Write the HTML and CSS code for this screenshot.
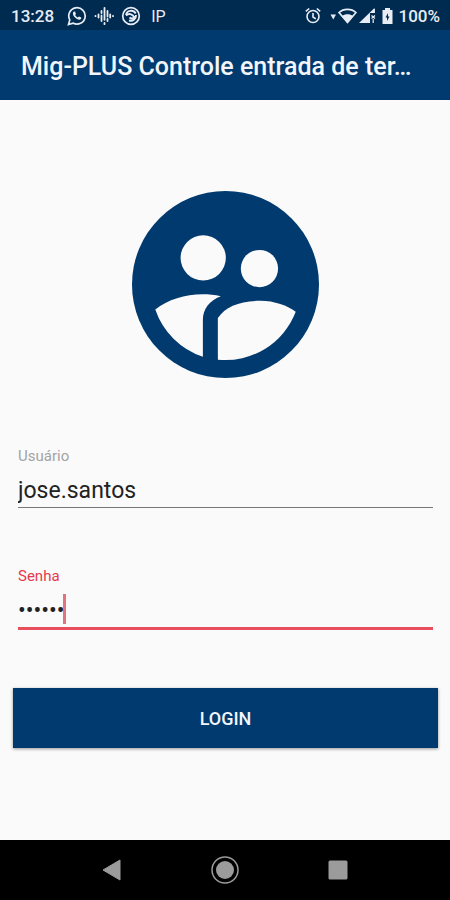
FILE: index.html
```html
<!DOCTYPE html>
<html lang="pt-BR">
<head>
    <meta charset="UTF-8">
    <meta name="viewport" content="width=device-width, initial-scale=1.0">
    <title>Mig-PLUS Login</title>
    <link rel="stylesheet" href="styles.css">
</head>
<body>

<!-- Status bar -->
<div class="status-bar">
    <span class="clock">13:28</span>
    <div class="status-icons">
        <svg width="20" height="20" viewBox="0 0 20 20" fill="none" stroke="currentColor">
            <path d="M1.5 18.5l1.3-4.6a8.2 8.2 0 1 1 3.2 3.2z" stroke-width="1.7"/>
            <path d="M7 5.4c-1.8 1-1.2 3.7.8 5.9c2.2 2.3 5 3.4 6.3 1.5l.2-1.2-2.3-1.2-1.2 1.2c-1.2-.5-2.1-1.4-2.7-2.5l.9-1.2-1-2.4z" fill="currentColor" stroke="none"/>
        </svg>
        <svg width="20" height="20" viewBox="0 0 20 20" fill="none" stroke="currentColor" stroke-width="1.8" stroke-linecap="round">
            <path d="M1.500 9.800v.4M4.500 8.500v3M7.500 5v2M7.500 9.500v5.500M10.500 1.800v12M10.500 17v1.200M13.500 5v5.500M13.500 13v2M16.200 8.500v3M19 9.800v.4"/>
        </svg>
        <svg width="20" height="20" viewBox="0 0 20 20" fill="none" stroke="currentColor">
            <circle cx="10" cy="10" r="8.3" stroke-width="1.7"/>
            <path d="M5 9c.8-5 7.500-5.500 9.700-1.500M5 9.500c3-2.500 6-1.800 8.500 1.800M15 9c.3 4-3.500 6.800-7 5.300M13.200 11.500c-1.500 1.200-3.200 1.200-4.700 0" stroke-width="1.9"/>
        </svg>
    </div>
    <span class="ip">IP</span>
    <div class="system-icons">
        <svg width="16" height="18" viewBox="0 0 16 18" fill="none" stroke="currentColor" stroke-width="1.6">
            <circle cx="8" cy="9.500" r="6"/>
            <path d="M.8 4.300L4.200 1.500M15.200 4.300L11.800 1.500M8 6v4l2.800 1.800"/>
        </svg>
        <svg class="wifi" width="27" height="18" viewBox="0 0 27 18">
            <path d="M.5 7.500h5.500l-2.700 5z" fill="currentColor"/>
            <path d="M9 5.500C13.500 1.300 21.500 1.300 26 5.500L17.500 15.500z" fill="none" stroke="currentColor" stroke-width="1.6"/>
            <path d="M12 9c3-2.500 8-2.500 11 0L17.500 16z" fill="currentColor"/>
        </svg>
        <svg width="17" height="18" viewBox="0 0 17 18" fill="currentColor">
            <path d="M0 16L15.500 1v5h-4.500v10z"/>
            <path d="M12.500 8.500l3.500 3M16 8.500l-3.500 3M14.200 12v4M15.300 2v4" stroke="currentColor" stroke-width="1.2"/>
        </svg>
        <svg class="battery" width="11" height="18" viewBox="0 0 11 18">
            <path d="M3 1h5v2h2.500v14H.5V3H3z" fill="currentColor"/>
            <path d="M6 6L3.500 10.500H5v3.500l2.500-4.500H6z" fill="#002b50"/>
        </svg>
        <span class="percent">100%</span>
    </div>
</div>

<header>
    <h1>Mig-PLUS Controle entrada de ter…</h1>
</header>

<main>
    <svg class="logo" viewBox="35 33 562 562" role="img" aria-label="Mig-PLUS">
        <circle cx="316" cy="314" r="281" fill="#003a6f"/>
        <g fill="#fafafa">
            <circle cx="249" cy="234" r="68"/>
            <circle cx="418" cy="266" r="56"/>
            <path d="M105 389C155 349 232 334 302 349C268 362 248 386 248 421V531A226 226 0 0 1 105 389Z"/>
            <path d="M293 415C315 380 360 363 420 363C464 363 502 378 527 396A226 226 0 0 1 293 540Z"/>
        </g>
    </svg>

    <!-- Login form -->
    <form>
        <div class="field">
            <label for="usuario">Usuário</label>
            <input type="text" id="usuario" name="usuario" value="jose.santos">
        </div>
        <div class="field active">
            <label for="senha">Senha</label>
            <input type="password" id="senha" name="senha" value="123456">
            <span class="caret"></span>
        </div>
        <button type="submit" class="login-btn">LOGIN</button>
    </form>
</main>

<!-- Navigation bar -->
<nav>
    <button type="button" aria-label="Voltar">
        <svg width="28" height="28" viewBox="0 0 28 28"><path d="M5 14L22 4v20z" fill="#9b9b9b" stroke="#9b9b9b" stroke-linejoin="round"/></svg>
    </button>
    <button type="button" aria-label="Início">
        <svg width="28" height="28" viewBox="0 0 28 28"><circle cx="14" cy="14" r="9" fill="#9b9b9b"/><circle cx="14" cy="14" r="13" fill="none" stroke="#9b9b9b" stroke-width="1.5"/></svg>
    </button>
    <button type="button" aria-label="Recentes">
        <svg width="28" height="28" viewBox="0 0 28 28"><rect x="4.5" y="4.5" width="19" height="19" rx="1.5" fill="#9b9b9b"/></svg>
    </button>
</nav>

</body>
</html>
```
FILE: styles.css
```css
* {
    box-sizing: border-box;
}
body {
    font-family: Roboto, "Liberation Sans", sans-serif;
    background-color: #fafafa;
    color: #222;
    margin: 0;
    min-height: 100vh;
    display: flex;
    flex-direction: column;
}
svg {
    display: block;
}
.status-bar {
    display: flex;
    align-items: center;
    height: 30px;
    padding: 2px 10px 0 11px;
    background-color: #002b50;
    color: #e8edf5;
    font-size: 17px;
    font-weight: 500;
}
.status-icons {
    display: flex;
    gap: 7px;
    margin-left: 13px;
}
.ip {
    margin-left: 10px;
    font-size: 16px;
    font-weight: 400;
}
.system-icons {
    display: flex;
    align-items: center;
    margin-left: auto;
}
.wifi {
    margin: 0 2px 0 9px;
}
.battery {
    margin: 0 5px 0 6px;
}
header {
    background-color: #003a6f;
    color: #f2f5fb;
    padding: 22px 21px 18px;
}
h1 {
    margin: 0;
    font-size: 25px;
    line-height: 30px;
    font-weight: 500;
    white-space: nowrap;
    overflow: hidden;
    text-overflow: ellipsis;
}
main {
    flex: 1;
    padding: 91px 12px 0 13px;
}
.logo {
    width: 187px;
    margin: 0 auto 68px;
}
.field {
    position: relative;
    margin: 0 5px 58px;
}
.field label {
    display: block;
    font-size: 15px;
    line-height: 20px;
    color: #a3a3a3;
}
.field input {
    display: block;
    width: 100%;
    height: 42px;
    padding: 8px 0 0;
    border: none;
    border-bottom: 1px solid #777;
    border-radius: 0;
    outline: none;
    background: transparent;
    color: #222;
    font-family: inherit;
    font-size: 23px;
}
.field.active label {
    color: #e5394a;
}
.field.active input {
    height: 44px;
    border-bottom: 3px solid #e84f5c;
}
/* text cursor of the focused field */
.caret {
    position: absolute;
    left: 45px;
    bottom: 6px;
    width: 3px;
    height: 30px;
    background-color: #e5737d;
}
.login-btn {
    display: block;
    width: 100%;
    height: 60px;
    border: none;
    background-color: #003a6f;
    color: #f2f5fb;
    font-family: inherit;
    font-size: 18px;
    font-weight: 500;
    box-shadow: 0 1px 3px rgba(0, 0, 0, 0.4);
    cursor: pointer;
}
nav {
    display: flex;
    justify-content: center;
    gap: 85px;
    height: 60px;
    background-color: #000;
}
nav button {
    padding: 0;
    border: none;
    background: none;
    cursor: pointer;
}
```
